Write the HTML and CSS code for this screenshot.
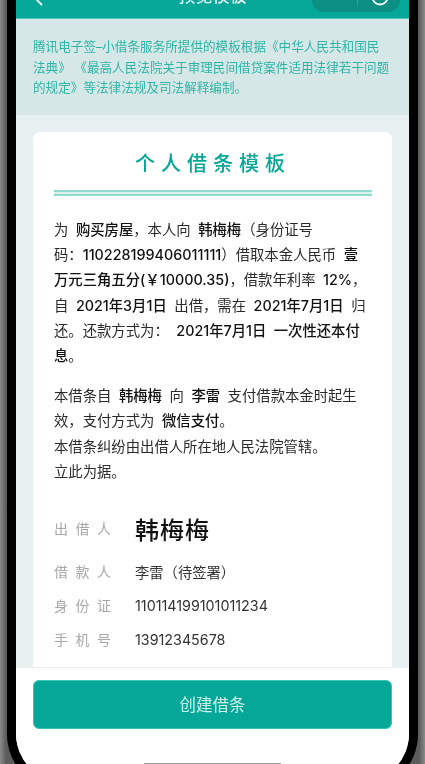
FILE: index.html
```html
<!DOCTYPE html>
<html lang="zh-CN">
<head>
<meta charset="utf-8">
<title>预览模板</title>
<link rel="stylesheet" href="styles.css">
</head>
<body>
<div class="frame">
  <div class="screen">
    <header class="nav">
      <svg class="back" width="12" height="14" viewBox="0 0 12 14"><path d="M9 -7 L3 -1 L9 5" fill="none" stroke="#fff" stroke-width="1.800"/></svg>
      <div class="nav-title">预览模板</div>
      <div class="capsule">
        <span class="divider"></span>
        <svg class="target" width="24" height="24" viewBox="0 0 24 24"><circle cx="14" cy="-3" r="7.500" fill="none" stroke="#fff" stroke-width="1.800"/></svg>
      </div>
    </header>
    <div class="notice">腾讯电子签–小借条服务所提供的模板根据《中华人民共和国民<br>法典》 《最高人民法院关于审理民间借贷案件适用法律若干问题<br>的规定》等法律法规及司法解释编制。</div>
    <main class="main">
      <section class="card">
        <h1 class="title">个人借条模板</h1>
        <div class="rule"></div>
        <p class="para">为 <b>购买房屋</b>，本人向 <b>韩梅梅</b>（身份证号<br>码：<b>110228199406011111</b>）借取本金人民币 <b>壹</b><br><b>万元三角五分(￥10000.35)</b>，借款年利率 <b>12%</b>，<br>自 <b>2021年3月1日</b> 出借，需在 <b>2021年7月1日</b> 归<br>还。还款方式为： <b>2021年7月1日 一次性还本付</b><br><b>息</b>。</p>
        <p class="para second">本借条自 <b>韩梅梅</b> 向 <b>李雷</b> 支付借款本金时起生<br>效，支付方式为 <b>微信支付</b>。<br>本借条纠纷由出借人所在地人民法院管辖。<br>立此为据。</p>
        <div class="row sign"><span class="label">出借人</span><span class="signature">韩梅梅</span></div>
        <div class="row borrower"><span class="label">借款人</span><span class="value">李雷（待签署）</span></div>
        <div class="row"><span class="label">身份证</span><span class="value">110114199101011234</span></div>
        <div class="row"><span class="label">手机号</span><span class="value">13912345678</span></div>
      </section>
    </main>
    <footer class="footer">
      <button class="create">创建借条</button>
      <div class="home"></div>
    </footer>
  </div>
</div>
</body>
</html>
```
FILE: styles.css
```css
* { box-sizing: border-box; }
html, body { margin: 0; height: 764px; overflow: hidden; }
body {
  width: 425px;
  padding: 0 7px;
  background: linear-gradient(90deg, #8a8a8a 0, #5c5c5c 6px, #5c5c5c 419px, #8a8a8a 425px);
  font-family: Inter, "Noto Sans CJK SC", "Noto Sans", sans-serif;
}
.frame {
  width: 411px;
  height: 792px;
  border: 9px solid #000;
  border-top: 0;
  border-radius: 0 0 58px 58px;
  filter: blur(0.45px);
}
.screen {
  height: 100%;
  display: flex;
  flex-direction: column;
  background: #fff;
  border-radius: 0 0 50px 50px;
  overflow: hidden;
}
.nav {
  flex: none;
  height: 19px;
  display: flex;
  align-items: flex-start;
  justify-content: center;
  position: relative;
  overflow: hidden;
  background: #05a898;
  border-bottom: 1px solid #5cc7bb;
}
.back { position: absolute; left: 17px; top: 0; overflow: visible; }
.nav-title {
  margin-top: -16px;
  line-height: 24px;
  font-size: 17px;
  font-weight: 500;
  color: #e4f6f3;
}
.capsule {
  position: absolute;
  left: 296px;
  top: 0;
  width: 88px;
  height: 12px;
  background: #0a8f82;
  border-radius: 0 0 15px 15px;
}
.divider { position: absolute; left: 45px; top: 0; width: 1px; height: 6px; background: #2aa094; }
.target { position: absolute; left: 54px; top: 0; overflow: visible; }
.notice {
  flex: none;
  height: 96px;
  padding: 18px 0 0 17px;
  background: #d5e8e7;
  color: #2fb5a6;
  font-size: 12.600px;
  line-height: 20.500px;
  white-space: nowrap;
}
.main {
  flex: 1;
  min-height: 0;
  overflow: hidden;
  padding: 17px 17px 0;
  background: #e9f0f2;
}
.card {
  padding: 17px 20px 0 21px;
  height: 560px;
  background: #fff;
  border-radius: 7px;
}
.title {
  margin: 0;
  text-align: center;
  font-size: 20px;
  line-height: 30px;
  font-weight: 500;
  letter-spacing: 6px;
  color: #05a898;
}
.rule {
  height: 6px;
  margin-top: 11px;
  background: linear-gradient(#8fdccf 0 2px, #d8f3ee 2px 4px, #8fdccf 4px 6px);
}
.para {
  margin: 21px 0 0;
  font-size: 14.350px;
  line-height: 25.200px;
  word-spacing: 3.500px;
  white-space: nowrap;
  color: #2b2b2b;
}
.para b { font-weight: 500; color: #111; }
.second { margin-top: 15px; }
.row { display: flex; align-items: center; height: 34px; }
.sign { height: 46px; margin-top: 21px; }
.borrower { margin-top: 3px; }
.label {
  flex: none;
  width: 81px;
  font-size: 14px;
  letter-spacing: 7.500px;
  color: #a8a8a8;
}
.value { font-size: 14.300px; color: #333; }
.signature { font-size: 24px; font-weight: 500; letter-spacing: 1px; color: #111; }
.footer {
  flex: none;
  padding: 12px 17px 0;
  background: #fff;
  border-top: 1px solid #ececec;
  height: 116px;
}
.create {
  display: block;
  width: 100%;
  height: 49px;
  padding: 0 0 2px;
  border: 1px solid #3cc4b4;
  border-radius: 6px;
  background: #05a898;
  color: #cdf0ea;
  font-family: inherit;
  font-size: 16.500px;
}
.home { width: 137px; height: 2px; margin: 34px auto 0; background: #999; }
```
